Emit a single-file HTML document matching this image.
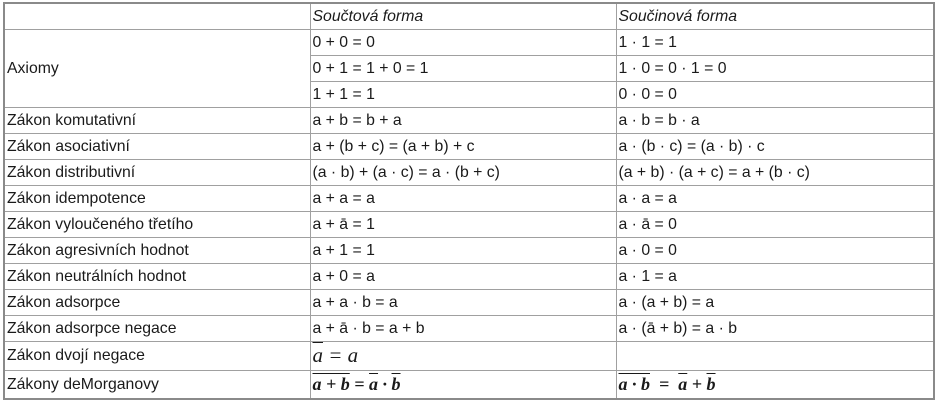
<!DOCTYPE html>
<html><head><meta charset="utf-8"><style>
body{margin:0;background:#fff;}
table{position:absolute;left:3px;top:2px;border-collapse:collapse;font-family:"Liberation Sans",sans-serif;font-size:15.8px;color:#1a1a1a;border:2px solid #8a8a8a;table-layout:fixed;}
td{border:1px solid #a0a0a0;padding:0 0 0 2px;height:25px;line-height:16px;white-space:nowrap;overflow:hidden;}
td.h{font-style:italic;height:25px;}
.m{font-family:"Liberation Serif",serif;font-style:italic;font-size:21px;}
.b{font-family:"Liberation Serif",serif;font-weight:bold;font-style:italic;font-size:18px;}
.o{text-decoration:overline;}
</style></head><body>
<table>
<colgroup><col style="width:306px"><col style="width:306px"><col style="width:318px"></colgroup>
<tr><td class="h"></td><td class="h">Součtová forma</td><td class="h">Součinová forma</td></tr>
<tr><td rowspan="3">Axiomy</td><td>0 + 0 = 0</td><td>1 · 1 = 1</td></tr>
<tr><td>0 + 1 = 1 + 0 = 1</td><td>1 · 0 = 0 · 1 = 0</td></tr>
<tr><td>1 + 1 = 1</td><td>0 · 0 = 0</td></tr>
<tr><td>Zákon komutativní</td><td>a + b = b + a</td><td>a · b = b · a</td></tr>
<tr><td>Zákon asociativní</td><td>a + (b + c) = (a + b) + c</td><td>a · (b · c) = (a · b) · c</td></tr>
<tr><td>Zákon distributivní</td><td>(a · b) + (a · c) = a · (b + c)</td><td>(a + b) · (a + c) = a + (b · c)</td></tr>
<tr><td>Zákon idempotence</td><td>a + a = a</td><td>a · a = a</td></tr>
<tr><td>Zákon vyloučeného třetího</td><td>a + ā = 1</td><td>a · ā = 0</td></tr>
<tr><td>Zákon agresivních hodnot</td><td>a + 1 = 1</td><td>a · 0 = 0</td></tr>
<tr><td>Zákon neutrálních hodnot</td><td>a + 0 = a</td><td>a · 1 = a</td></tr>
<tr><td>Zákon adsorpce</td><td>a + a · b = a</td><td>a · (a + b) = a</td></tr>
<tr><td>Zákon adsorpce negace</td><td>a + ā · b = a + b</td><td>a · (ā + b) = a · b</td></tr>
<tr><td style="height:28px">Zákon dvojí negace</td><td style="height:28px"><span class="m"><span style="border-top:1px solid #333;padding-top:1px"><span class="o">a</span></span> = a</span></td><td style="height:28px"></td></tr>
<tr><td style="height:27px">Zákony deMorganovy</td><td style="height:27px"><span class="b"><span class="o">a + b</span> = <span class="o">a</span> · <span class="o">b</span></span></td><td style="height:27px"><span class="b"><span class="o">a · b</span> &nbsp;= &nbsp;<span class="o">a</span> + <span class="o">b</span></span></td></tr>
</table>
</body></html>
